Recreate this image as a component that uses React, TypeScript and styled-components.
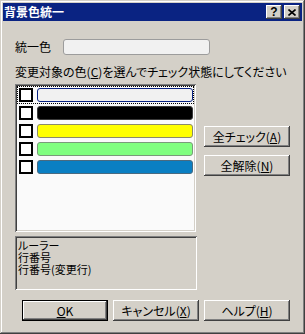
import React from 'react'
import styled, { createGlobalStyle, css } from 'styled-components'

const GlobalStyle = createGlobalStyle`
    html, body {
        margin: 0;
        padding: 0;
        background: #d4d0c8;
    }
    body {
        font-family: "Noto Sans CJK JP", "Liberation Sans", sans-serif;
        font-size: 12px;
        font-feature-settings: "palt";
        color: #000;
    }
`

const raised = css`
    box-shadow: inset -1px -1px #404040, inset 1px 1px #ffffff,
        inset -2px -2px #808080, inset 2px 2px #d4d0c8;
`

const sunken = css`
    box-shadow: inset 1px 1px #808080, inset -1px -1px #ffffff,
        inset 2px 2px #404040, inset -2px -2px #d4d0c8;
`

const Window = styled.div`
    width: 305px;
    height: 334px;
    box-sizing: border-box;
    padding: 3px;
    background: #d4d0c8;
    box-shadow: inset -1px -1px #404040, inset 1px 1px #d4d0c8,
        inset -2px -2px #808080, inset 2px 2px #ffffff;
    display: flex;
    flex-direction: column;
`

const TitleBar = styled.div`
    height: 18px;
    background: #0a2382;
    display: flex;
    align-items: center;
    padding: 0 2px 0 1px;
`

const TitleText = styled.div`
    flex: 1;
    color: #fff;
    font-weight: bold;
    font-size: 12px;
    line-height: 12px;
`

const CaptionButton = styled.div`
    width: 16px;
    height: 14px;
    box-sizing: border-box;
    background: #d4d0c8;
    ${raised};
    display: flex;
    align-items: center;
    justify-content: center;
    font-family: "Liberation Sans", sans-serif;
    font-weight: bold;
    font-size: 12px;
    line-height: 12px;
    & + & {
        margin-left: 2px;
    }
`

const Content = styled.div`
    flex: 1;
    display: flex;
    flex-direction: column;
    padding: 18px 12px 0 12px;
`

const FieldRow = styled.div`
    display: flex;
    align-items: center;
    height: 16px;
`

const FieldLabel = styled.div`
    width: 48px;
    line-height: 12px;
`

const Swatch = styled.div`
    width: 147px;
    height: 16px;
    box-sizing: border-box;
    border: 1px solid #9c9c9c;
    border-radius: 3px;
    background: #f1f1f1;
`

const SectionLabel = styled.div`
    margin-top: 11px;
    height: 12px;
    line-height: 12px;
    white-space: nowrap;
`

const MainRow = styled.div`
    margin-top: 6px;
    display: flex;
`

const ListBox = styled.div`
    width: 181px;
    height: 148px;
    box-sizing: border-box;
    padding: 2px;
    background: #fafafa;
    ${sunken};
`

const Row = styled.div<{ $focused?: boolean }>`
    height: 18px;
    box-sizing: border-box;
    display: flex;
    align-items: center;
    padding: 0 1px 0 2px;
    gap: 4px;
    outline: ${(p) => (p.$focused ? '1px dotted #000' : 'none')};
    outline-offset: -1px;
`

const CheckBox = styled.div`
    width: 14px;
    height: 14px;
    box-sizing: border-box;
    border: 2px solid #000;
    background: #fff;
    flex-shrink: 0;
`

const ColorBar = styled.div<{ $color: string; $edge: string }>`
    flex: 1;
    height: 14px;
    box-sizing: border-box;
    border: 1px solid ${(p) => p.$edge};
    border-radius: 3px;
    background: ${(p) => p.$color};
`

const SideColumn = styled.div`
    margin-left: 8px;
    padding-top: 42px;
    display: flex;
    flex-direction: column;
    gap: 8px;
`

const Button = styled.div<{ $default?: boolean }>`
    width: 86px;
    height: 21px;
    box-sizing: border-box;
    background: #d4d0c8;
    display: flex;
    align-items: center;
    justify-content: center;
    line-height: 12px;
    white-space: nowrap;
    ${(p) =>
        p.$default
            ? css`
                  box-shadow: inset 0 0 0 1px #000, inset -2px -2px #404040,
                      inset 2px 2px #ffffff, inset -3px -3px #808080;
              `
            : raised};
`

const InfoBox = styled.div`
    margin-top: 4px;
    width: 182px;
    height: 54px;
    box-sizing: border-box;
    padding: 3px 3px;
    ${sunken};
`

const InfoLine = styled.div`
    font-size: 11px;
    line-height: 12px;
    height: 12px;
    white-space: nowrap;
`

const Footer = styled.div`
    margin-top: 10px;
    margin-left: 7px;
    display: flex;
    gap: 5px;
`

const Key = styled.span`
    text-decoration: underline;
    text-underline-offset: 1px;
`

const colors = [
    { color: '#f1f1f1', edge: '#0a2382', focused: true },
    { color: '#000000', edge: '#3a3a3a' },
    { color: '#ffff00', edge: '#8a8a6a' },
    { color: '#80ff80', edge: '#7a9a7a' },
    { color: '#0a7fc3', edge: '#4a6a80' }
]

const CloseIcon = () => (
    <svg width='8' height='7' viewBox='0 0 8 7'>
        <path d='M0.5 0.5 L7.5 6.5 M7.5 0.5 L0.5 6.5' stroke='#000' strokeWidth='1.6' />
    </svg>
)

const App = () => {
    return (
        <>
            <GlobalStyle />
            <Window>
                <TitleBar>
                    <TitleText>背景色統一</TitleText>
                    <CaptionButton>?</CaptionButton>
                    <CaptionButton>
                        <CloseIcon />
                    </CaptionButton>
                </TitleBar>
                <Content>
                    <FieldRow>
                        <FieldLabel>統一色</FieldLabel>
                        <Swatch />
                    </FieldRow>
                    <SectionLabel>
                        変更対象の色(<Key>C</Key>)を選んでチェック状態にしてください
                    </SectionLabel>
                    <MainRow>
                        <ListBox>
                            {colors.map((c, i) => (
                                <Row key={i} $focused={c.focused}>
                                    <CheckBox />
                                    <ColorBar $color={c.color} $edge={c.edge} />
                                </Row>
                            ))}
                        </ListBox>
                        <SideColumn>
                            <Button>
                                全チェック(<Key>A</Key>)
                            </Button>
                            <Button>
                                全解除(<Key>N</Key>)
                            </Button>
                        </SideColumn>
                    </MainRow>
                    <InfoBox>
                        <InfoLine>ルーラー</InfoLine>
                        <InfoLine>行番号</InfoLine>
                        <InfoLine>行番号(変更行)</InfoLine>
                    </InfoBox>
                    <Footer>
                        <Button $default>
                            <Key>O</Key>K
                        </Button>
                        <Button>
                            キャンセル(<Key>X</Key>)
                        </Button>
                        <Button>
                            ヘルプ(<Key>H</Key>)
                        </Button>
                    </Footer>
                </Content>
            </Window>
        </>
    )
}

export default App
